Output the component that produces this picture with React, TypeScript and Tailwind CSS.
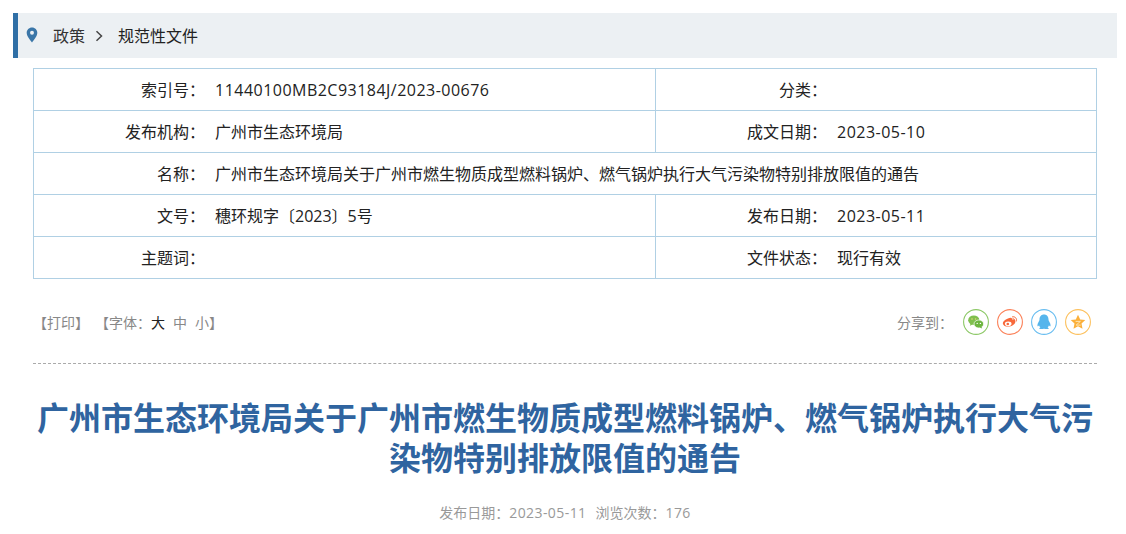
import React from "react";

const font = '"Open Sans", "Noto Sans CJK SC", sans-serif';
const colon = "\uFF1A"; // full-width colon

const Num = ({ children }: { children: React.ReactNode }) => (
  <span className="tracking-[0.03em]">{children}</span>
);

const rows: { label: string; value: React.ReactNode; label2?: string; value2?: React.ReactNode }[] = [
  { label: "索引号", value: <Num>11440100MB2C93184J/2023-00676</Num>, label2: "分类", value2: "" },
  { label: "发布机构", value: "广州市生态环境局", label2: "成文日期", value2: <Num>2023-05-10</Num> },
  { label: "名称", value: "广州市生态环境局关于广州市燃生物质成型燃料锅炉、燃气锅炉执行大气污染物特别排放限值的通告" },
  { label: "文号", value: "穗环规字〔2023〕5号", label2: "发布日期", value2: <Num>2023-05-11</Num> },
  { label: "主题词", value: "", label2: "文件状态", value2: "现行有效" },
];

const WechatIcon = () => (
  <svg viewBox="0 0 26 26" className="w-[26px] h-[26px]">
    <circle cx="13" cy="13" r="12.4" fill="none" stroke="#8cc866" strokeWidth="1.1" />
    <ellipse cx="10.8" cy="11.2" rx="5.6" ry="4.8" fill="#7fbf4d" />
    <path d="M7.6 14.5l-.8 2.2 2.8-1.3z" fill="#7fbf4d" />
    <ellipse cx="15.8" cy="15" rx="4.8" ry="4" fill="#6cb53f" stroke="#fff" strokeWidth="0.7" />
    <path d="M18.4 17.8l.8 1.8-2.6-1.1z" fill="#6cb53f" />
    <circle cx="9" cy="10" r=".8" fill="#e8d27a" />
    <circle cx="12.6" cy="10" r=".8" fill="#e8d27a" />
    <circle cx="14.2" cy="14.4" r=".7" fill="#fff" />
    <circle cx="17.4" cy="14.4" r=".7" fill="#fff" />
  </svg>
);

const WeiboIcon = () => (
  <svg viewBox="0 0 26 26" className="w-[26px] h-[26px]">
    <circle cx="13" cy="13" r="12.4" fill="none" stroke="#fb8058" strokeWidth="1.1" />
    <path d="M11 9.6c2-1.2 3.6-1 4 0 .2.7 0 1.2 0 1.2 1.8-.6 3.4 0 3.4 1.6 0 2.6-3.6 5.2-7.4 5.2-3 0-5.2-1.4-5.2-3.4 0-1.500 2-3.500 5.200-4.600z" fill="#f8683a" />
    <ellipse cx="11.200" cy="14.800" rx="3.300" ry="2.300" fill="#fff" />
    <circle cx="10.800" cy="15" r="1.300" fill="#f8683a" />
    <path d="M15.500 7.800c2.500-.6 4.700 1.600 4 4.200M15.800 9.800c1.200-.3 2.200.8 1.900 2" fill="none" stroke="#f8683a" strokeWidth="1" strokeLinecap="round" />
  </svg>
);

const QqIcon = () => (
  <svg viewBox="0 0 26 26" className="w-[26px] h-[26px]">
    <circle cx="13" cy="13" r="12.4" fill="none" stroke="#68bdf0" strokeWidth="1.1" />
    <path d="M13 5.500c-3 0-4.500 2.300-4.500 5 0 .8-.2 1.200-.7 2-.9 1.500-1.600 3.200-1.300 4.700.4.500 1.100-.3 1.500-1 .2 1 .8 1.800 1.400 2.300-.8.300-1.200.8-1 1.200.3.500 2.800.5 4.600 0 1.800.5 4.300.5 4.600 0 .2-.4-.2-.9-1-1.200.6-.5 1.200-1.300 1.400-2.300.4.700 1.100 1.500 1.500 1 .3-1.500-.4-3.200-1.300-4.700-.5-.8-.7-1.200-.7-2 0-2.700-1.500-5-4.500-5z" fill="#55b5ec" />
  </svg>
);

const StarIcon = () => (
  <svg viewBox="0 0 26 26" className="w-[26px] h-[26px]">
    <circle cx="13" cy="13" r="12.400" fill="none" stroke="#fcc05c" strokeWidth="1.100" />
    <path d="M13 5.800l2.200 4.700 5.100.6-3.800 3.500 1 5.100-4.500-2.500-4.500 2.500 1-5.100-3.800-3.500 5.100-.6z" fill="#fbb03b" />
    <path d="M10.600 12.400h4.800l-4.300 3.700h4.600" fill="none" stroke="#fde3b0" strokeWidth="1" />
  </svg>
);

export default function App() {
  return (
    <div className="bg-white min-h-[534px] pt-[13px] pl-[13px] pr-[9px]" style={{ fontFamily: font }}>
      {/* breadcrumb */}
      <div className="flex items-center h-[45px] bg-[#ecf0f3] border-l-[5px] border-[#2f6fa6] pl-[8px] text-[16px] text-[#333]">
        <svg viewBox="0 0 14 18" preserveAspectRatio="none" className="w-[12px] h-[16px] mb-[1px]">
          <path d="M7 0.500C3.400 0.500.8 3.200.8 6.600c0 4 4.200 8.300 6.200 10.900 2-2.600 6.200-6.900 6.200-10.900C13.200 3.200 10.600.5 7 .5z" fill="#3a76a8" />
          <circle cx="7" cy="6.400" r="2.300" fill="#ecf0f3" />
        </svg>
        <span className="ml-[15px]">政策</span>
        <svg viewBox="0 0 10 12" className="w-[10px] h-[12px] ml-[9px]">
          <path d="M2.500 1.200L7.500 6l-5 4.800" fill="none" stroke="#444" strokeWidth="1.500" />
        </svg>
        <span className="ml-[14px] text-[#222]">规范性文件</span>
      </div>

      {/* info table */}
      <div className="px-[20px] mt-[10px]">
        <table className="w-full border-collapse table-fixed text-[16px] text-[#222]">
          <colgroup>
            <col className="w-[622px]" />
            <col />
          </colgroup>
          <tbody>
            {rows.map((r) => (
              <tr key={r.label} className="h-[42px]">
                <td colSpan={r.label2 ? 1 : 2} className="border border-[#b0d0e4] p-0">
                  <div className="flex pt-[1px]">
                    <span className="w-[171px] shrink-0 text-right">{r.label}{colon}</span>
                    <span className="ml-[10px] whitespace-nowrap">{r.value}</span>
                  </div>
                </td>
                {r.label2 && (
                  <td className="border border-[#b0d0e4] p-0">
                    <div className="flex pt-[1px]">
                      <span className="w-[171px] shrink-0 text-right">{r.label2}{colon}</span>
                      <span className="ml-[10px] whitespace-nowrap">{r.value2}</span>
                    </div>
                  </td>
                )}
              </tr>
            ))}
          </tbody>
        </table>

        {/* toolbar */}
        <div className="flex items-center justify-between h-[85px] pt-[2px] border-b border-dashed border-[#aaa] text-[14px] text-[#888]">
          <div className="flex items-center">
            <span>【打印】</span>
            <span className="ml-[6px]">【字体{colon}</span>
            <span className="text-[#222]">大</span>
            <span className="ml-[8px]">中</span>
            <span className="ml-[8px]">小</span>
            <span>】</span>
          </div>
          <div className="flex items-center pr-[6px]">
            <span className="mr-[10px]">分享到{colon}</span>
            <div className="flex gap-[8px]">
              <WechatIcon />
              <WeiboIcon />
              <QqIcon />
              <StarIcon />
            </div>
          </div>
        </div>

        {/* title */}
        <h1 className="mt-[34px] text-center text-[32px] leading-[40px] font-bold text-[#2f64a0]">
          广州市生态环境局关于广州市燃生物质成型燃料锅炉、燃气锅炉执行大气污染物特别排放限值的通告
        </h1>
        <div className="mt-[24px] text-center text-[14px] text-[#999]">
          <span>发布日期{colon}<Num>2023-05-11</Num></span>
          <span className="ml-[9px]">浏览次数{colon}<Num>176</Num></span>
        </div>
      </div>
    </div>
  );
}
